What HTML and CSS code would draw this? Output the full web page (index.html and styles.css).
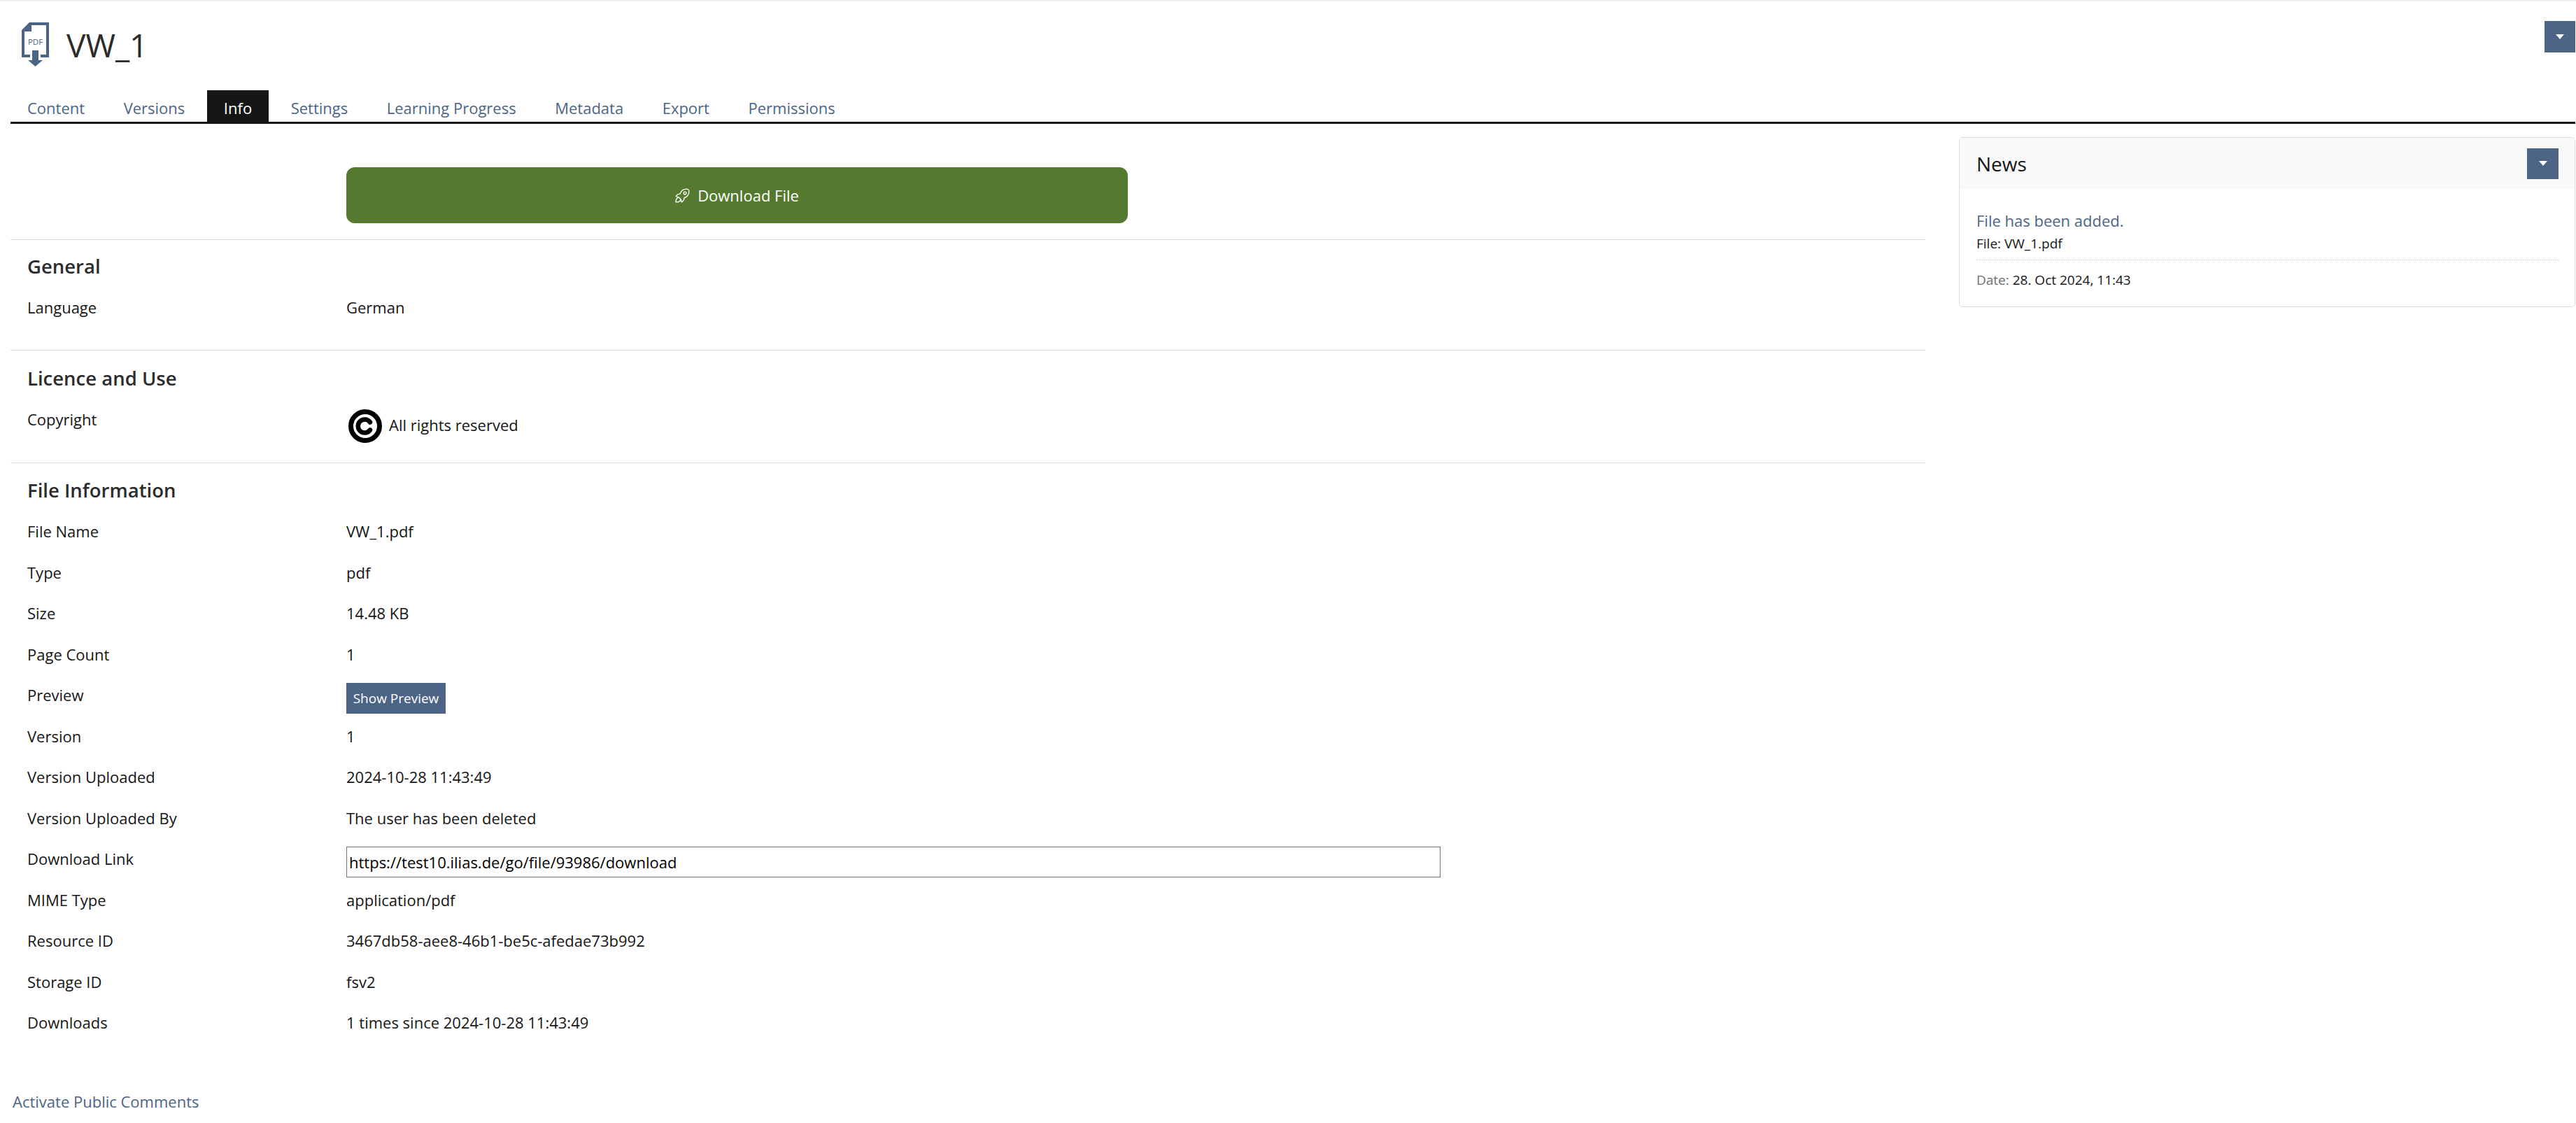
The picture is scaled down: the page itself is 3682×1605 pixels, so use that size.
FILE: index.html
```html
<!DOCTYPE html>
<html lang="en">
<head>
<meta charset="utf-8">
<title>VW_1</title>
<link rel="stylesheet" href="styles.css">
</head>
<body>
<div class="topbar"></div>
<header class="header">
  <svg class="file-icon" viewBox="0 0 39 63" aria-hidden="true">
    <polygon class="icon-fill" points="0,11 11,0 14,0 14,13 0,13"/>
    <path class="icon-line" d="M12 2H37V48H27M2 12V48H12"/>
    <text class="icon-text" x="19.5" y="32" text-anchor="middle">PDF</text>
    <polygon class="icon-fill" points="15,40 24,40 24,54 30,54 19.5,63 9,54 15,54"/>
  </svg>
  <h1 class="title">VW_1</h1>
  <button class="menu-btn" type="button"><span class="caret"></span></button>
</header>
<nav class="tabs">
  <a class="tab">Content</a>
  <a class="tab">Versions</a>
  <a class="tab tab-active">Info</a>
  <a class="tab">Settings</a>
  <a class="tab">Learning Progress</a>
  <a class="tab">Metadata</a>
  <a class="tab">Export</a>
  <a class="tab">Permissions</a>
</nav>
<div class="layout">
  <main class="content">
    <div class="download-section">
      <button class="download-btn" type="button">
        <svg class="rocket" viewBox="3 3 18 18" aria-hidden="true">
          <path d="M4 13a8 8 0 0 1 7 7a6 6 0 0 0 3-5a9 9 0 0 0 6-8a3 3 0 0 0-3-3a9 9 0 0 0-8 6a6 6 0 0 0-5 3"/>
          <path d="M7 14a6 6 0 0 0-3 6a6 6 0 0 0 6-3"/>
          <circle cx="15" cy="9" r="1.6"/>
        </svg>
        <span>Download File</span>
      </button>
    </div>
    <section class="section section-general">
      <h2 class="section-title">General</h2>
      <div class="row"><div class="label">Language</div><div class="value">German</div></div>
    </section>
    <section class="section section-licence">
      <h2 class="section-title">Licence and Use</h2>
      <div class="row row-auto">
        <div class="label">Copyright</div>
        <div class="value copyright">
          <svg class="cc-icon" viewBox="0 0 48 48" aria-hidden="true">
            <circle cx="24" cy="24" r="20.5"/>
            <path d="M31 18.5A9.5 9.5 0 1 0 31 29.5"/>
          </svg>
          <span class="copyright-text">All rights reserved</span>
        </div>
      </div>
    </section>
    <section class="section section-last">
      <h2 class="section-title">File Information</h2>
      <div class="row"><div class="label">File Name</div><div class="value">VW_1.pdf</div></div>
      <div class="row"><div class="label">Type</div><div class="value">pdf</div></div>
      <div class="row"><div class="label">Size</div><div class="value">14.48 KB</div></div>
      <div class="row"><div class="label">Page Count</div><div class="value">1</div></div>
      <div class="row"><div class="label">Preview</div><div class="value"><button class="small-btn" type="button">Show Preview</button></div></div>
      <div class="row"><div class="label">Version</div><div class="value">1</div></div>
      <div class="row"><div class="label">Version Uploaded</div><div class="value">2024-10-28 11:43:49</div></div>
      <div class="row"><div class="label">Version Uploaded By</div><div class="value">The user has been deleted</div></div>
      <div class="row"><div class="label">Download Link</div><div class="value"><input class="link-input" type="text" value="https://test10.ilias.de/go/file/93986/download"></div></div>
      <div class="row"><div class="label">MIME Type</div><div class="value">application/pdf</div></div>
      <div class="row"><div class="label">Resource ID</div><div class="value">3467db58-aee8-46b1-be5c-afedae73b992</div></div>
      <div class="row"><div class="label">Storage ID</div><div class="value">fsv2</div></div>
      <div class="row"><div class="label">Downloads</div><div class="value">1 times since 2024-10-28 11:43:49</div></div>
    </section>
    <a class="comments-link">Activate Public Comments</a>
  </main>
  <aside class="panel">
    <div class="panel-head">
      <h3 class="panel-title">News</h3>
      <button class="menu-btn menu-btn-panel" type="button"><span class="caret"></span></button>
    </div>
    <div class="panel-body">
      <a class="news-link">File has been added.</a>
      <div class="news-file">File: VW_1.pdf</div>
      <div class="news-date"><span class="muted">Date:</span> 28. Oct 2024, 11:43</div>
    </div>
  </aside>
</div>
</body>
</html>
```

FILE: styles.css
```css
* { box-sizing: border-box; }
html, body { margin: 0; padding: 0; background: #fff; }
body {
  font-family: "Open Sans", "Noto Sans", sans-serif;
  font-size: 22px;
  color: #161616;
}
.topbar { height: 2px; background: #ececec; }

.header {
  display: flex;
  align-items: flex-start;
  height: 127px;
  padding: 28px 1px 0 31px;
}
.file-icon { width: 39px; height: 63px; margin-top: 2px; flex: none; }
.icon-fill { fill: #4c6586; }
.icon-line { fill: none; stroke: #4c6586; stroke-width: 4; }
.icon-text { font-family: "Open Sans", sans-serif; font-size: 11.5px; fill: #4c6586; }
.title {
  margin: 0 0 0 25px;
  font-size: 46px;
  font-weight: 400;
  line-height: 68px;
  color: #2c2c2c;
  flex: 1;
}
.menu-btn {
  display: flex;
  align-items: center;
  justify-content: center;
  width: 44px;
  height: 45px;
  padding: 0;
  border: 0;
  background: #4c6586;
  flex: none;
}
.caret {
  width: 0;
  height: 0;
  border-left: 6px solid transparent;
  border-right: 6px solid transparent;
  border-top: 7px solid #fff;
}

.tabs {
  display: flex;
  gap: 7.5px;
  margin: 0 1px 0 15px;
  height: 48px;
  border-bottom: 3px solid #161616;
}
.tab {
  height: 45px;
  padding: 0 24px;
  line-height: 51px;
  color: #4c6586;
}
.tab-active { background: #161616; color: #fff; }

.layout {
  display: flex;
  align-items: flex-start;
  gap: 48px;
  padding: 0 1px 0 15px;
}
.content { flex: 1; min-width: 0; }

.download-section {
  padding: 62px 0 23px 480px;
  border-bottom: 1px solid #dcdcdc;
}
.download-btn {
  display: flex;
  align-items: center;
  justify-content: center;
  gap: 11px;
  width: 1117px;
  height: 80px;
  padding: 0;
  border: 0;
  border-radius: 12px;
  background: #557a2f;
  color: #fff;
  font: inherit;
}
.rocket {
  width: 21px;
  height: 21px;
  fill: none;
  stroke: #fff;
  stroke-width: 1.2;
  stroke-linejoin: round;
  stroke-linecap: round;
}

.section {
  padding: 19px 0 30px 24px;
  border-bottom: 1px solid #dcdcdc;
}
.section-general { padding-top: 18px; padding-bottom: 31.5px; }
.section-licence { padding-top: 20px; padding-bottom: 27px; }
.section-last { padding-bottom: 0; border-bottom: 0; }
.section-title {
  margin: 0 0 9px;
  font-size: 27.5px;
  font-weight: 600;
  line-height: 40px;
  color: #2c2c2c;
}
.row {
  display: flex;
  height: 58.5px;
  line-height: 58.5px;
}
.row-auto { height: 64px; }
.label { width: 456px; flex: none; }
.value { flex: 1; min-width: 0; }

.copyright {
  display: flex;
  align-items: flex-start;
  gap: 10px;
  padding-top: 15px;
  line-height: 44px;
}
.cc-icon {
  width: 48px;
  height: 48px;
  margin-left: 3px;
  fill: none;
  stroke: #000;
}
.cc-icon circle { stroke-width: 7; }
.cc-icon path { stroke-width: 6.5; stroke-linecap: round; }

.small-btn {
  display: block;
  width: 142px;
  height: 44px;
  margin-top: 12px;
  padding: 0;
  border: 0;
  background: #4c6586;
  color: #fff;
  font-family: inherit;
  font-size: 19px;
}
.link-input {
  display: block;
  width: 1564px;
  height: 44px;
  margin-top: 12px;
  padding: 0 3px;
  border: 1px solid #767676;
  font-family: inherit;
  font-size: 22px;
  color: #000;
  background: #fff;
}
.comments-link {
  display: block;
  margin: 68px 0 0 3px;
  line-height: 30px;
  color: #4c6586;
}

.panel {
  width: 881px;
  flex: none;
  margin-top: 19px;
  border: 1px solid #dedede;
  border-radius: 5px;
  overflow: hidden;
}
.panel-head {
  display: flex;
  align-items: center;
  justify-content: space-between;
  height: 73px;
  padding: 0 23px 0 24px;
  background: #f9f9f9;
}
.panel-title {
  margin: 0;
  font-size: 28px;
  font-weight: 500;
  line-height: 40px;
}
.menu-btn-panel { width: 45px; height: 44px; }
.panel-body { padding: 28px 23px 23px 24px; }
.news-link {
  display: block;
  font-size: 22px;
  line-height: 34px;
  color: #4c6586;
}
.news-file {
  font-size: 19px;
  line-height: 32px;
  padding-bottom: 7px;
  border-bottom: 1px dotted #c4c4c4;
}
.news-date {
  margin-top: 13px;
  font-size: 19px;
  line-height: 30px;
}
.muted { color: #6f6f6f; }
```
